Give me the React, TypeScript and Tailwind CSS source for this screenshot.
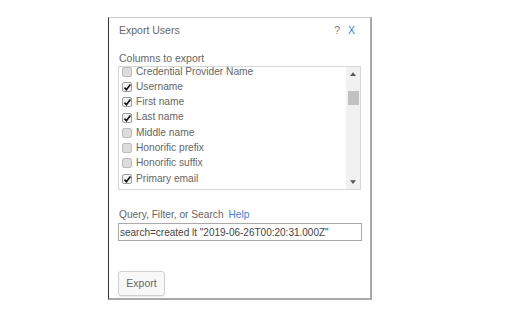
import { Fragment } from 'react'

type Col = { label: string; checked: boolean }

const COLUMNS: Col[] = [
  { label: 'Credential Provider Name', checked: false },
  { label: 'Username', checked: true },
  { label: 'First name', checked: true },
  { label: 'Last name', checked: true },
  { label: 'Middle name', checked: false },
  { label: 'Honorific prefix', checked: false },
  { label: 'Honorific suffix', checked: false },
  { label: 'Primary email', checked: true },
  { label: 'Secondary email', checked: false },
]

function Box({ checked }: { checked: boolean }) {
  return (
    <span
      className={
        'relative w-[10px] h-[10px] rounded-[2px] border flex-shrink-0 ' +
        (checked ? 'border-[#9a9a9a] bg-[#f4f4f4]' : 'border-[#bdbdbd] bg-[#dcdcdc]')
      }
    >
      {checked && (
        <svg viewBox="0 0 10 10" className="absolute left-[0px] top-[0px] w-[9px] h-[9px]">
          <path d="M1.6 5.2 L3.8 7.4 L8.2 1.8" fill="none" stroke="#111" strokeWidth="1.8" />
        </svg>
      )}
    </span>
  )
}

export default function App() {
  return (
    <div className="w-[512px] h-[320px] bg-white relative font-['Liberation_Sans',Arial,sans-serif] text-[10.2px] text-[#666]">
      {/* dialog */}
      <div className="absolute left-[108px] top-[17px] w-[264px] h-[283px] bg-white border-t border-t-[#c8c8c8] border-l border-l-[#333] border-r-2 border-r-[#a9a9a9] border-b-2 border-b-[#a9a9a9] flex flex-col px-[9px]">
        {/* header */}
        <div className="flex items-center h-[24px] pt-[1px] text-[10.5px]">
          <span className="flex-1 pl-[1px]">Export Users</span>
          <span className="text-[#777] mr-[8px]">?</span>
          <span className="text-[#3d7fd6] mr-[6px]">X</span>
        </div>

        <div className="mt-[9px] leading-[14px] pl-[1px] text-[10.5px]">Columns to export</div>

        {/* list */}
        <div className="mt-[1px] w-[243px] h-[124px] border border-[#d6d6d6] flex overflow-hidden">
          <div className="flex-1 overflow-hidden">
            <div className="mt-[-3px] pl-[3px]">
              {COLUMNS.map(c => (
                <Fragment key={c.label}>
                  <div className="flex items-center gap-[4px] h-[15.3px]">
                    <Box checked={c.checked} />
                    <span className="leading-none">{c.label}</span>
                  </div>
                </Fragment>
              ))}
            </div>
          </div>
          <div className="w-[14px] bg-[#f1f1f1] flex flex-col items-center">
            <svg viewBox="0 0 8 5" className="w-[6px] h-[4px] mt-[5px]">
              <path d="M0 5 L4 0 L8 5 Z" fill="#555" />
            </svg>
            <div className="w-[11px] h-[14px] bg-[#c1c1c1] mt-[15px]" />
            <div className="flex-1" />
            <svg viewBox="0 0 8 5" className="w-[6px] h-[4px] mb-[5px]">
              <path d="M0 0 L8 0 L4 5 Z" fill="#555" />
            </svg>
          </div>
        </div>

        {/* query */}
        <div className="mt-[18px] leading-[14px] pl-[1px]">
          Query, Filter, or Search <span className="text-[#3d7fd6] ml-[2px]">Help</span>
        </div>
        <div className="mt-[1px] w-[244px] h-[18px] border border-[#aaa] flex items-center px-[1px] text-[#444] text-[10px]">
          search=created lt "2019-06-26T00:20:31.000Z"
        </div>

        <div className="mt-[30px]">
          <button className="w-[47px] h-[25px] rounded-[3px] border border-[#d0d0d0] bg-[#f8f8f8] text-[#666] text-[10.5px] shadow-[0_1px_1px_rgba(0,0,0,0.08)]">
            Export
          </button>
        </div>
      </div>
    </div>
  )
}
